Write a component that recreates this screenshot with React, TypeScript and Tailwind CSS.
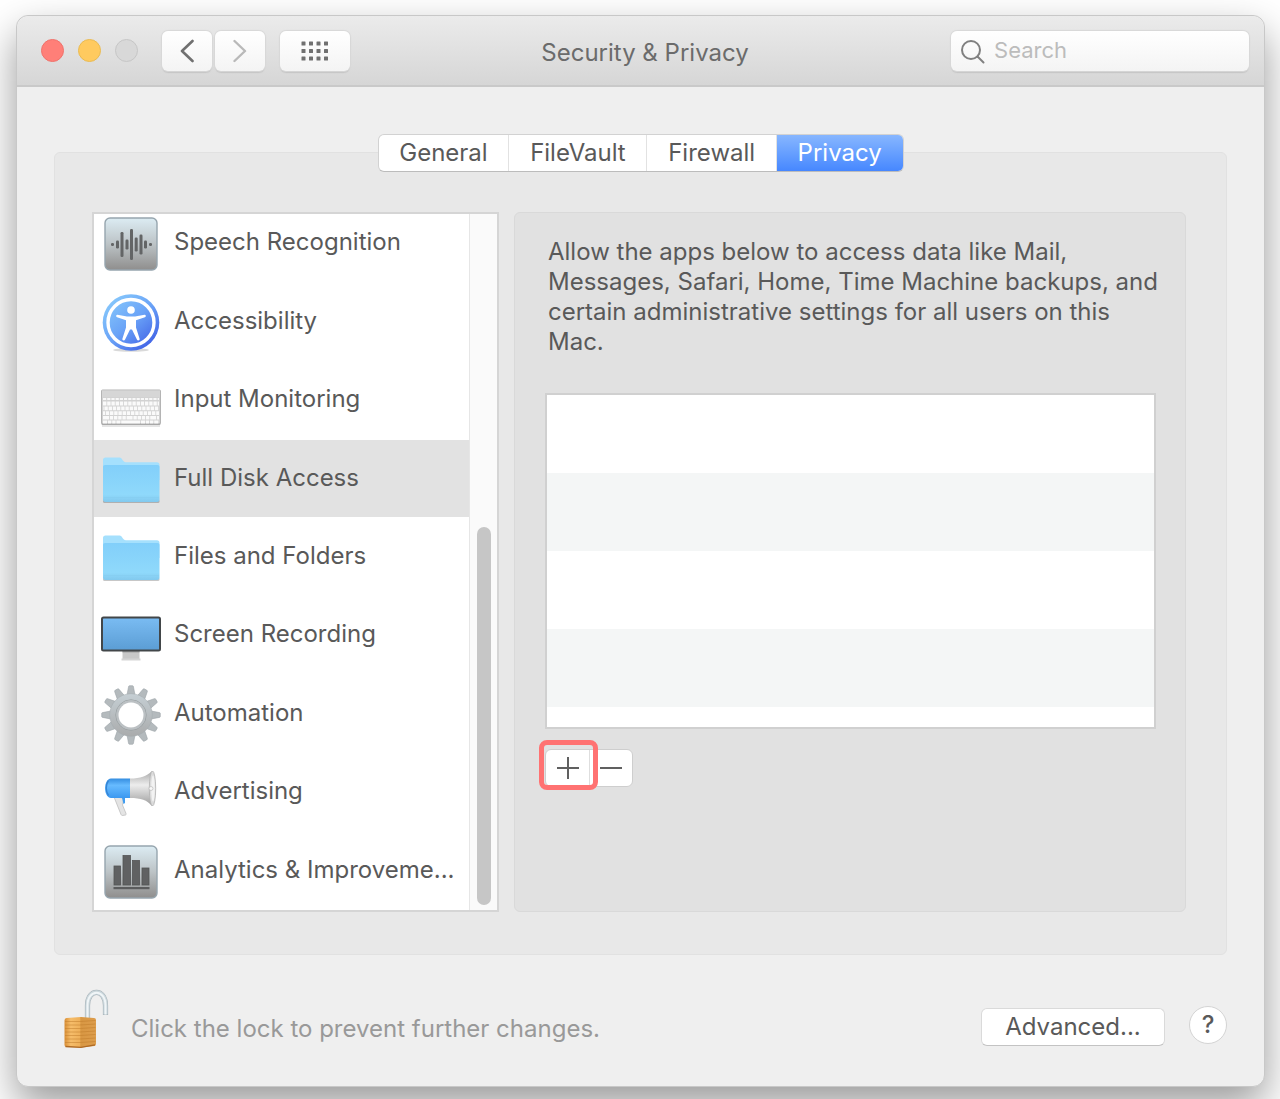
import { useState } from "react"
import type { ReactNode } from "react"
import { clsx } from "clsx"

interface Category {
  name: string
  icon: ReactNode
}

const tabs = ["General", "FileVault", "Firewall", "Privacy"]

function TileIcon({ id, children }: { id: string; children: ReactNode }) {
  return (
    <svg viewBox="0 0 60 60" className="size-15 shrink-0" aria-hidden="true">
      <defs>
        <linearGradient id={id} x1="0" y1="0" x2="0" y2="1">
          <stop offset="0" stopColor="#dcecf3" />
          <stop offset="0.5" stopColor="#bcc3c6" />
          <stop offset="1" stopColor="#8f8e8d" />
        </linearGradient>
      </defs>
      <rect x="4" y="4" width="52" height="52" rx="5" fill={`url(#${id})`} stroke="#96a5ae" strokeWidth="1.4" />
      {children}
    </svg>
  )
}

function SpeechIcon() {
  const bars = [
    [10, 3], [15, 8], [19.5, 25], [24.5, 10], [29, 31], [33.7, 14], [38.5, 20], [43, 8], [48, 3],
  ]
  return (
    <TileIcon id="speech">
      {bars.map(([x, h]) => (
        <rect key={x} x={x} y={30.5 - h / 2} width="3" height={h} rx="1.2" fill="#636566" />
      ))}
    </TileIcon>
  )
}

function AnalyticsIcon() {
  return (
    <TileIcon id="analytics">
      <g fill="#606162" stroke="#545556" strokeWidth="0.8">
        <rect x="13" y="24" width="6.5" height="19" />
        <rect x="22" y="13.500" width="7.500" height="29.500" />
        <rect x="31.500" y="18.500" width="7" height="24.500" />
        <rect x="41" y="26" width="7" height="17" />
      </g>
      <rect x="12.500" y="45" width="36" height="2.200" fill="#5b5c5d" />
    </TileIcon>
  )
}

function AccessibilityIcon() {
  return (
    <svg viewBox="0 0 60 60" className="size-15 shrink-0" aria-hidden="true">
      <defs>
        <linearGradient id="access" x1="0.15" y1="0.1" x2="0.85" y2="0.9">
          <stop offset="0" stopColor="#85c6fb" />
          <stop offset="0.5" stopColor="#6aa3f7" />
          <stop offset="1" stopColor="#4264e6" />
        </linearGradient>
      </defs>
      <ellipse cx="30" cy="57" rx="18" ry="1.800" fill="#000" opacity="0.15" />
      <circle cx="30" cy="29.500" r="28.300" fill="url(#access)" />
      <circle cx="30" cy="29.500" r="23" fill="none" stroke="#fff" strokeWidth="3.400" />
      <circle cx="30" cy="17" r="3.800" fill="#fff" />
      <path
        d="M16.500 21.800 26 23.500h8l9.500-1.700c1.400-.2 1.900 2 .4 2.400L35 27.200v7.300l3.600 11.200c.5 1.700-2 2.500-2.700.8L31 36.500h-2L24.100 46.500c-.7 1.700-3.200.9-2.700-.8L25 34.500v-7.300l-8.900-3c-1.500-.4-1-2.600.4-2.400Z"
        fill="#fff"
      />
    </svg>
  )
}

function KeyboardIcon() {
  return (
    <svg viewBox="0 0 60 60" className="size-15 shrink-0" aria-hidden="true">
      <rect x="1" y="53" width="58" height="3" fill="#000" opacity="0.1" />
      <rect x="0.500" y="19" width="59" height="34.500" rx="1" fill="#d2d2d2" stroke="#b4b4b4" strokeWidth="1" />
      <rect x="1" y="19.500" width="58" height="6.500" fill="#d6d6d6" />
      <path d="M1 53h58" stroke="#9c9c9c" strokeWidth="1.200" />
      <path d="M2 28h56" stroke="#f8f8f8" strokeWidth="2.200" strokeDasharray="3.200 1" />
      {[0, 1, 2].map((row) => (
        <path
          key={row}
          d={`M2 ${32.500 + row * 4.800}H58`}
          stroke="#fafafa"
          strokeWidth="3.800"
          strokeDasharray="3.400 0.800"
          strokeDashoffset={row * -1.400}
        />
      ))}
      <path d="M2 46.800h56" stroke="#fafafa" strokeWidth="3.600" strokeDasharray="6 .8 3.400 .8 3.400 .8 3.400 .8 3.400 .8" />
      <path d="M2 51h56" stroke="#fafafa" strokeWidth="3" strokeDasharray="4.200 .8 3.400 .8 3.400 .8 4 .8 19 .8 4 .8 3.400 .8 3.400 .8" />
    </svg>
  )
}

function FolderIcon({ id }: { id: string }) {
  return (
    <svg viewBox="0 0 60 60" className="size-15 shrink-0" aria-hidden="true">
      <defs>
        <linearGradient id={id} x1="0" y1="0" x2="0" y2="1">
          <stop offset="0" stopColor="#82cffa" />
          <stop offset="0.8" stopColor="#8fd9fb" />
          <stop offset="1" stopColor="#82c9ee" />
        </linearGradient>
      </defs>
      <rect x="2" y="49.500" width="56.500" height="3.500" rx="1.500" fill="#000" opacity="0.22" />
      <path
        d="M2 10c0-1.500.9-2.500 2.400-2.500h14.200c2.800 0 3 4.800 6.400 4.800h31c1.600 0 2.500.9 2.500 2.500V30H2Z"
        fill="#a5e0fd"
      />
      <path d="M2 17c0-1.200.7-2 2-2h52.500c1.300 0 2 .8 2 2V49.500c0 1.600-.9 2.500-2.500 2.500H4.500C2.900 52 2 51.100 2 49.500Z" fill={`url(#${id})`} />
      <path d="M3 47.500h55" stroke="#84ccf0" strokeWidth="0.600" />
    </svg>
  )
}

function DisplayIcon() {
  return (
    <svg viewBox="0 0 60 60" className="size-15 shrink-0" aria-hidden="true">
      <defs>
        <linearGradient id="display" x1="0" y1="0" x2="0" y2="1">
          <stop offset="0" stopColor="#7abcf3" />
          <stop offset="1" stopColor="#5b9dd4" />
        </linearGradient>
      </defs>
      <path d="M21.500 44h17v9h-17z" fill="#c8c8c8" />
      <path d="M21.500 44h17v2.500h-17z" fill="#a3a3a3" />
      <path d="M20.500 52.500h19v2h-19z" fill="#d4d4d4" />
      <rect x="1" y="11.500" width="58" height="33" rx="1.500" fill="url(#display)" stroke="#424649" strokeWidth="2" />
    </svg>
  )
}

function GearIcon() {
  const teeth = Array.from({ length: 12 }, (_, i) => i * 30)
  return (
    <svg viewBox="0 0 60 60" className="size-15 shrink-0" aria-hidden="true">
      <defs>
        <linearGradient id="gear" gradientUnits="userSpaceOnUse" x1="0" y1="0" x2="0" y2="60">
          <stop offset="0" stopColor="#cbd6dc" />
          <stop offset="1" stopColor="#a4a4a4" />
        </linearGradient>
        <mask id="hole">
          <rect width="60" height="60" fill="#fff" />
          <circle cx="30" cy="30" r="12.500" fill="#000" />
        </mask>
      </defs>
      <g mask="url(#hole)">
        <g fill="#b4babd" stroke="#9ea5a9" strokeWidth="0.600">
          {teeth.map((angle) => (
            <path key={angle} d="M25.800 11 27.600 1.500q.2-.8 1-.8h2.800q.8 0 1 .8L34.200 11Z" transform={`rotate(${angle} 30 30)`} />
          ))}
        </g>
        <circle cx="30" cy="30" r="21.300" fill="url(#gear)" stroke="#a3aaae" strokeWidth="0.500" />
        <circle cx="30" cy="30" r="15.200" fill="none" stroke="#999fa2" strokeWidth="0.900" />
        <circle cx="30" cy="30" r="13.600" fill="none" stroke="#bbc0c3" strokeWidth="2.200" />
      </g>
    </svg>
  )
}

function MegaphoneIcon() {
  return (
    <svg viewBox="0 0 60 60" className="size-15 shrink-0" aria-hidden="true">
      <defs>
        <linearGradient id="horn" x1="0" y1="0" x2="0" y2="1">
          <stop offset="0" stopColor="#a7a7a7" />
          <stop offset="0.4" stopColor="#ededed" />
          <stop offset="1" stopColor="#9c9c9c" />
        </linearGradient>
        <linearGradient id="body" x1="0" y1="0" x2="0" y2="1">
          <stop offset="0" stopColor="#348de0" />
          <stop offset="0.35" stopColor="#67bbff" />
          <stop offset="1" stopColor="#3b98f0" />
        </linearGradient>
      </defs>
      <path d="m13 34 7 17.500q.5 1 1.500 1l3-.5q1-.3.500-1.500L21.500 42l1.500-7Z" fill="#e4e4e4" stroke="#b8b8b8" strokeWidth="0.700" />
      <path d="m21 35 1.500 6 1.500-1v-5Z" fill="#3f9cf0" />
      <path d="M10 15.500h19v19.500H10c-8-1-8-18.500 0-19.500Z" fill="url(#body)" />
      <path d="M7.500 17.500c-3 4-3 11 0 15" fill="none" stroke="#3584d4" strokeWidth="1.400" />
      <path d="M29 15.500c11 0 16-2 22-7.500 4 6 4 29 0 35-5-6-11-8-22-8Z" fill="url(#horn)" />
      <ellipse cx="51.500" cy="25.500" rx="3.200" ry="17.500" fill="#dcdcdc" stroke="#b3b3b3" strokeWidth="0.800" />
      <ellipse cx="52" cy="25.500" rx="1.800" ry="13" fill="#f3f3f3" />
      <circle cx="50" cy="25.500" r="2" fill="#f8f8f8" stroke="#bcbcbc" strokeWidth="0.700" />
    </svg>
  )
}

function LockIcon() {
  return (
    <svg viewBox="0 0 46 60" className="h-15 w-[46px] shrink-0" aria-hidden="true">
      <defs>
        <linearGradient id="lock" x1="0" y1="0" x2="1" y2="0">
          <stop offset="0" stopColor="#d98f37" />
          <stop offset="0.2" stopColor="#f6bd6a" />
          <stop offset="0.48" stopColor="#eeb05a" />
          <stop offset="0.52" stopColor="#d89743" />
          <stop offset="1" stopColor="#dd9d4c" />
        </linearGradient>
      </defs>
      <path d="M24.500 31V16.500C24.500 -1 42.500 -1 42.500 16.500V26" fill="none" stroke="#a1adb3" strokeWidth="5.200" />
      <path d="M24.500 31V16.500C24.500 -1 42.500 -1 42.500 16.500V25.500" fill="none" stroke="#cbd7dc" strokeWidth="4.200" />
      <path d="M24.500 31V16.500C24.500 -.5 42.500 -.5 42.500 16.500V25.500" fill="none" stroke="#f0f5f7" strokeWidth="2" />
      <path d="M1.500 31.500q0-2.500 2-2.500L18 28l13 1q2 0 2 2v24q0 1.500-1.500 2L18 58.500 3.500 58q-2-.2-2-2Z" fill="url(#lock)" />
      <g stroke="#bd7828" strokeWidth="0.800" opacity="0.600">
        {[32.500, 36, 39.500, 43, 46.500, 50, 53.500].map((y) => (
          <path key={y} d={`M2 ${y}h15l15.500-1`} fill="none" />
        ))}
      </g>
      <path d="M2.500 57.500 18 58.300 32 55.800" fill="none" stroke="#ae6924" strokeWidth="1.300" />
    </svg>
  )
}

const categories: Category[] = [
  { name: "Speech Recognition", icon: <SpeechIcon /> },
  { name: "Accessibility", icon: <AccessibilityIcon /> },
  { name: "Input Monitoring", icon: <KeyboardIcon /> },
  { name: "Full Disk Access", icon: <FolderIcon id="folder-disk" /> },
  { name: "Files and Folders", icon: <FolderIcon id="folder-files" /> },
  { name: "Screen Recording", icon: <DisplayIcon /> },
  { name: "Automation", icon: <GearIcon /> },
  { name: "Advertising", icon: <MegaphoneIcon /> },
  { name: "Analytics & Improveme...", icon: <AnalyticsIcon /> },
]

const toolButton =
  "flex h-10 items-center justify-center rounded-md bg-linear-to-b from-white to-[#f4f4f4] shadow-[0_0_1px_1px_#d8d8d8,0_2px_1px_#c4c4c4]"

function TitleBar() {
  return (
    <header className="flex h-[71px] items-center justify-between rounded-t-xl border-b-2 border-[#c9c9c9] bg-linear-to-b from-[#ebebeb] to-[#d6d6d6] px-[15px]">
      <div className="flex flex-1 items-center pl-[9px]">
        <div className="flex gap-[14px]">
          <button aria-label="Close" className="size-[23px] rounded-full border border-[#f0726b] bg-[#ff7f78]" />
          <button aria-label="Minimize" className="size-[23px] rounded-full border border-[#eabb52] bg-[#ffca5f]" />
          <button aria-label="Zoom" disabled className="size-[23px] rounded-full border border-[#c6c6c6] bg-[#d8d8d8]" />
        </div>
        <div className="ml-6 flex gap-[3px]">
          <button aria-label="Back" className={clsx(toolButton, "w-[50px]")}>
            <svg viewBox="0 0 14 24" className="h-6 w-[14px]" fill="none" stroke="#707070" strokeWidth="2.600">
              <path d="M12.500 2 2 12l10.500 10" strokeLinecap="round" strokeLinejoin="round" />
            </svg>
          </button>
          <button aria-label="Forward" disabled className={clsx(toolButton, "w-[50px]")}>
            <svg viewBox="0 0 14 24" className="h-6 w-[14px]" fill="none" stroke="#b9b9b9" strokeWidth="2.400">
              <path d="m1.500 2 10.500 10-10.500 10" strokeLinecap="round" strokeLinejoin="round" />
            </svg>
          </button>
        </div>
        <button aria-label="Show All" className={clsx(toolButton, "ml-[15px] w-[70px]")}>
          <svg viewBox="0 0 28 20" className="h-5 w-7" fill="#707070">
            {[0, 1, 2].map((row) =>
              [0, 1, 2, 3].map((col) => (
                <rect key={`${row}-${col}`} x={0.500 + col * 7.500} y={0.500 + row * 7.500} width="4" height="4" rx="0.500" />
              ))
            )}
          </svg>
        </button>
      </div>
      <h1 className="pt-1 text-2xl text-[#6b6b6b]">Security &amp; Privacy</h1>
      <div className="flex flex-1 justify-end">
        <label className={clsx(toolButton, "w-[298px] gap-2 px-[9px]")}>
          <svg viewBox="0 0 26 26" className="size-[26px] shrink-0" fill="none" stroke="#808080" strokeWidth="2">
            <circle cx="11" cy="12" r="9" />
            <path d="m17.500 18.500 6 6" strokeLinecap="round" />
          </svg>
          <input
            type="search"
            aria-label="Search"
            placeholder="Search"
            className="min-w-0 flex-1 bg-transparent text-[22px] outline-none placeholder:text-[#bcbcbc]"
          />
        </label>
      </div>
    </header>
  )
}

export default function App() {
  const [tab, setTab] = useState("Privacy")
  const [selected, setSelected] = useState("Full Disk Access")

  return (
    <div className="min-h-screen overflow-hidden bg-white pt-[15px] pr-[15px] pb-3 pl-4 font-['Inter',sans-serif] text-2xl text-[#595959]">
      <main className="rounded-xl border border-[#c8c8c8] bg-[#efefef] shadow-[0_18px_40px_rgba(0,0,0,0.4)]">
        <TitleBar />

        <div className="px-[37px] pt-[47px] pb-[37px]">
          <nav role="tablist" className="relative z-10 mx-auto flex h-[38px] w-[526px] overflow-hidden rounded-md border border-[#d2d2d2] border-b-[#bcbcbc] bg-white">
            {tabs.map((name) => (
              <button
                key={name}
                role="tab"
                aria-selected={tab === name}
                onClick={() => setTab(name)}
                className={clsx(
                  "flex-auto px-5",
                  tab === name
                    ? "bg-linear-to-b from-[#87b6ff] to-[#4687ff] text-white"
                    : "border-r border-[#e2e2e2]"
                )}
              >
                {name}
              </button>
            ))}
          </nav>

          <section className="-mt-5 flex gap-[15px] rounded-md border border-[#e1e1e1] bg-[#e8e8e8] pt-[59px] pr-10 pb-[42px] pl-[37px]">
            <div className="flex h-[700px] w-[407px] shrink-0 overflow-hidden border-2 border-[#d5d5d5] bg-white">
              <ul className="-mt-[9px] grid h-[704px] min-w-0 flex-1 grid-cols-1 grid-rows-9 gap-[2px]">
                {categories.map(({ name, icon }) => (
                  <li key={name} className="min-h-0">
                    <button
                      onClick={() => setSelected(name)}
                      className={clsx(
                        "flex h-full w-full items-center gap-[13px] pt-[2px] pr-3 pl-[7px] text-left",
                        selected === name && "bg-[#e2e2e2]"
                      )}
                    >
                      {icon}
                      <span className="truncate pb-1">{name}</span>
                    </button>
                  </li>
                ))}
              </ul>
              <div className="flex w-7 flex-col items-center justify-end border-l border-[#e6e6e6] bg-[#fafafa] pb-[5px]">
                <div className="h-[378px] w-[14px] rounded-full bg-[#c6c6c6]" />
              </div>
            </div>

            <div className="min-w-0 flex-1 rounded-md border border-[#d9d9d9] bg-[#e1e1e1] pt-6 pr-[29px] pl-[30px]">
              <p className="-mr-2 pl-[3px] leading-[30px]">
                Allow the apps below to access data like Mail, Messages, Safari, Home, Time Machine backups, and
                certain administrative settings for all users on this Mac.
              </p>
              <div className="mt-9 flex h-[336px] flex-col overflow-hidden border-2 border-[#d0d0d0] bg-white">
                {[0, 1, 2, 3].map((row) => (
                  <div key={row} className="h-[78px] shrink-0 odd:bg-white even:bg-[#f4f6f6]" />
                ))}
              </div>
              <div className="mt-5 flex h-[38px] w-[88px] rounded-md border border-[#cecece] bg-white">
                <button aria-label="Add" className="relative flex w-11 items-center justify-center border-r border-[#dedede]">
                  <svg viewBox="0 0 22 22" className="size-[22px]" stroke="#606060" strokeWidth="2">
                    <path d="M11 0v22M0 11h22" />
                  </svg>
                  <span className="absolute -top-[10px] -right-[9px] -bottom-1 -left-[7px] rounded-lg border-[5px] border-[#ff7272]" />
                </button>
                <button aria-label="Remove" className="flex flex-1 items-center justify-center">
                  <svg viewBox="0 0 22 22" className="size-[22px]" stroke="#606060" strokeWidth="2">
                    <path d="M0 11h22" />
                  </svg>
                </button>
              </div>
            </div>
          </section>

          <footer className="flex items-center pt-[34px] pl-[9px]">
            <LockIcon />
            <p className="ml-[22px] flex-1 pt-5 text-[#999]">Click the lock to prevent further changes.</p>
            <button className="mt-4 h-[38px] w-[184px] rounded-md border border-[#dadada] border-b-[#c3c3c3] bg-white">
              Advanced...
            </button>
            <button aria-label="Help" className="mt-3 ml-6 size-[38px] rounded-full border border-[#d4d4d4] bg-white font-medium">
              ?
            </button>
          </footer>
        </div>
      </main>
    </div>
  )
}
